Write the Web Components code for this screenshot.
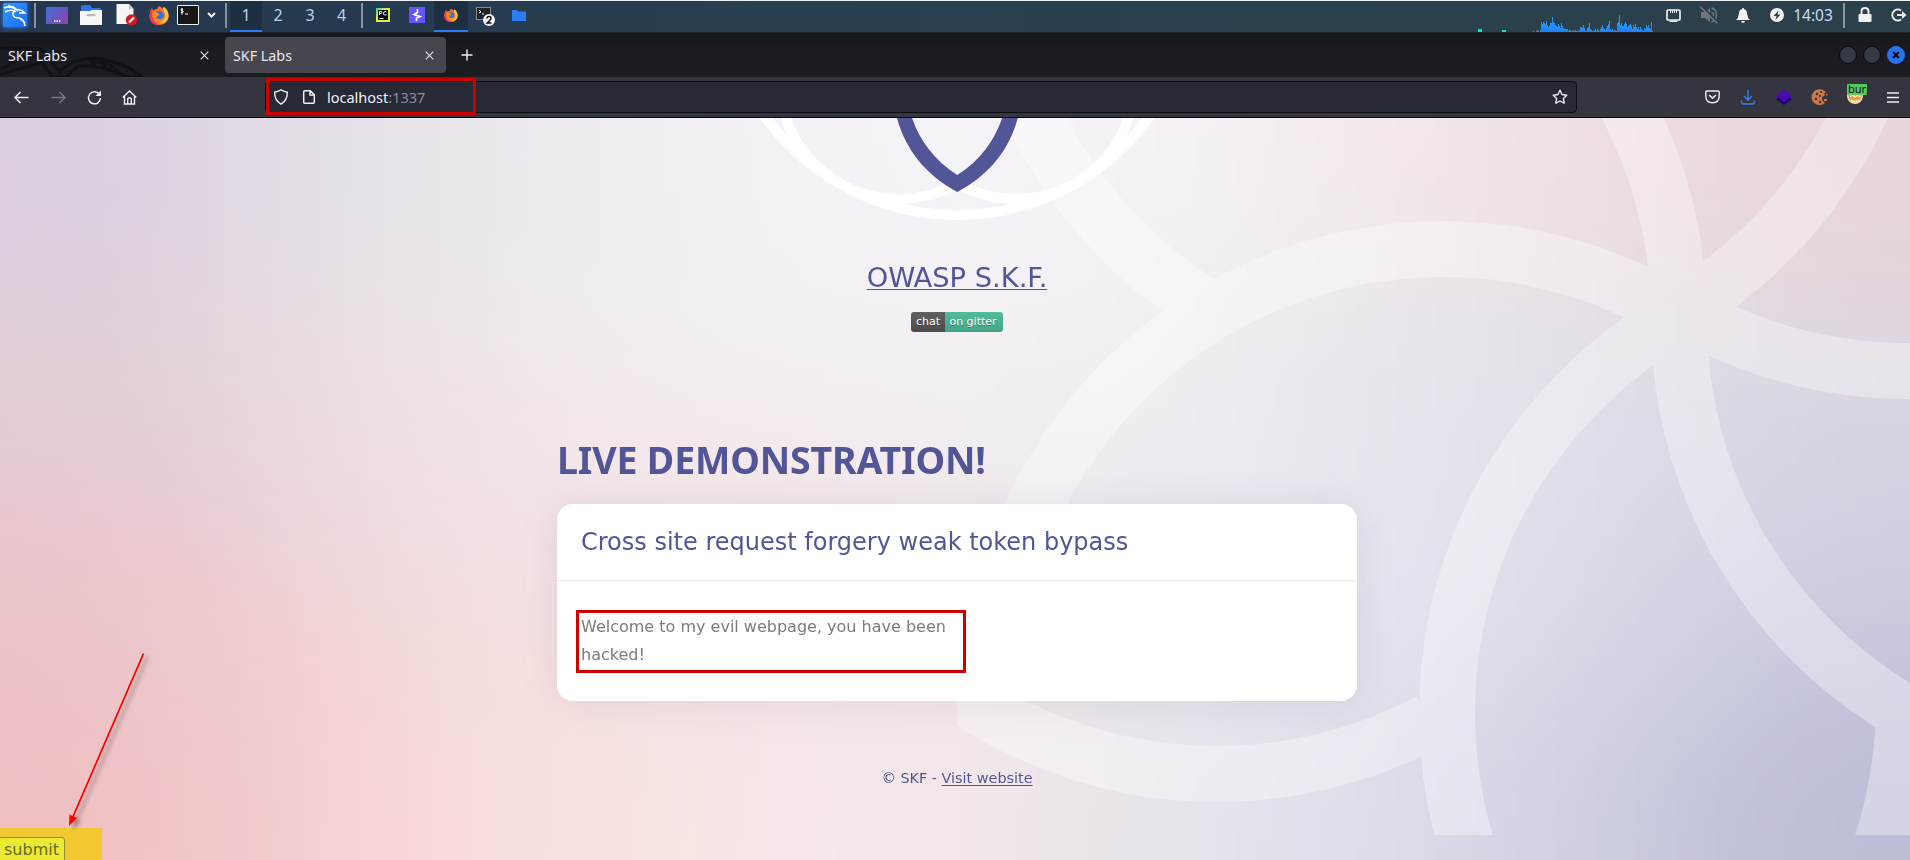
<!DOCTYPE html>
<html lang="en">
<head>
<meta charset="utf-8">
<title>SKF Labs</title>
<style>
html,body{margin:0;height:100%;overflow:hidden}
body{font-family:"Noto Sans","Open Sans",sans-serif}
</style>
</head>
<body>
<desk-top></desk-top>
<script>
const define=(name,html,setup)=>customElements.define(name,class extends HTMLElement{
  constructor(){super();const t=document.createElement('template');t.innerHTML=html;
    this.attachShadow({mode:'open'}).append(t.content.cloneNode(true));}
  connectedCallback(){if(setup)setup(this.shadowRoot,this);}
});

const fox=`<path d="M10 1C13 2 14 4 14.500 5C16 4 15 3 15 2C18 4 20 8 19.500 12C19 17 15 20 10 20C4 20 .5 16 .5 11C.5 8 1.500 5 3 3L4 5.500C6 4 8 4 8.500 4C8.600 3 9 2 10 1Z" fill="#ff6a30"/><path d="M15 2C18 4 20 8 19.500 12C18.500 17 14 19 10 18.500C15 17 17 12 15.500 8C15 6.500 14 5.500 14 4C14 3 14 2 15 2Z" fill="#ffc43a"/><path d="M3 3C1.500 5 .5 8 .5 11C.5 16 4 20 10 20C6 18 3 15 3 11Z" fill="#f0325f"/><circle cx="10" cy="11" r="4.800" fill="#2f74dd"/><path d="M4 7C6 6.500 7.500 7 9 8.500C11 8.500 11 10 9 10.500C7 12 6.500 13 9 14C11 15 13.500 14 14.500 12C14.500 16 12 18 9 17.500C5 17 3 13 4 7Z" fill="#ff8a22"/>`;
const icons={
 kali:[24,24,`<defs><linearGradient id="k" y2="1"><stop stop-color="#2b9cff"/><stop offset="1" stop-color="#2468ee"/></linearGradient></defs><rect width="24" height="24" rx="1" fill="url(#k)"/><path d="M1 5Q8 2 14 7M2 9Q7 6 13 8.500M5 3Q11 3 15 8M13 8Q9 9 10 12Q11 15 16 15Q21 16 22 23M14 7Q18 6 22 10Q19 10 16 10M17 16Q20 17 22 20" fill="none" stroke="#fff" stroke-width="1.500"/>`],
 desk:[22,17,`<defs><linearGradient id="d" x2="1" y2=".6"><stop stop-color="#3b72dc"/><stop offset="1" stop-color="#8449ae"/></linearGradient></defs><rect width="22" height="17" rx="1" fill="url(#d)"/><path d="M8 14h1.500m1 0H12m1 0h1.500" stroke="#fff" stroke-width="1.300"/>`],
 files:[22,21,`<path d="M1 1q0-1 1-1h8l2 3h8q1 0 1 1v4H1z" fill="#2f74e8"/><path d="M0 6h10l2-1h10v15H0z" fill="#f7f7f7"/><rect x="6.500" y="9" width="9" height="2.200" rx="1" fill="#b8b8b8"/>`],
 doc:[22,22,`<path d="M.5 0H13l4.500 5v15H.5z" fill="#f6f6f6"/><path d="M13 0v5h4.500z" fill="#ccc"/><circle cx="15.500" cy="16" r="5.700" fill="#d41920"/><path d="M13 18.500l5-5" stroke="#fff" stroke-width="2"/>`],
 fox:[20,21,fox],
 term:[22,20,`<rect x=".5" y=".5" width="21" height="19" rx=".5" fill="#171717" stroke="#eee"/><path d="M6 4q-2-.5-2 .8t2 1.400-2 1.600M5 3v6.500M3.800 8h1M8 9h3" fill="none" stroke="#fff"/>`],
 chev:[9,6,`<path d="M1 1l3.500 3.500L8 1" fill="none" stroke="#eee" stroke-width="2"/>`],
 pc:[14,14,`<defs><linearGradient id="p" x2="1" y2="1"><stop stop-color="#21d789"/><stop offset=".4" stop-color="#e0f042"/><stop offset="1" stop-color="#d6ee4a"/></linearGradient></defs><rect width="14" height="14" fill="url(#p)"/><rect x="2" y="2" width="10" height="10" fill="#050505"/><path d="M3.500 7V3.500H5q1 0 1 1t-1 1H3.500M10.500 4Q10 3.500 9 3.500T7.500 5.200 9 7t1.500-.5M3.500 10.500h4" fill="none" stroke="#fff" stroke-width="1"/>`],
 bolt2:[16,16,`<rect width="16" height="16" fill="#6355ff"/><path d="M8.500 2v3.500L5 7.500l6 2-3.500 1.500V14" fill="none" stroke="#fff" stroke-width="1.700"/>`],
 term2:[20,20,`<rect x=".5" y=".5" width="14" height="12" fill="#20242a" stroke="#858a90"/><path d="M3 3l2 2-2 1M6 7h2" fill="none" stroke="#fff"/><circle cx="13" cy="13" r="6" fill="#f4f4f4"/><path d="M11 11.500q0-2 2-2t2 1.700q0 1.300-3.800 4.800H15.500" fill="none" stroke="#111" stroke-width="1.500"/>`],
 folder:[14,11,`<path d="M0 0h5l1.500 1.500H14V11H0z" fill="#2f7cf2"/>`],
 net:[15,13,`<rect x="1" y="1" width="13" height="10" rx="1" fill="none" stroke="#eee" stroke-width="1.700"/><path d="M3.500 11.500h8v1.500h-8z" fill="#eee"/><path d="M4.500 1v3m2-3v3m2-3v3m2-3v3" stroke="#eee"/>`],
 mute:[18,18,`<path d="M1 6h4l5-4v14l-5-4H1z" fill="#70777d"/><path d="M11.500 2q5 1.500 5 7t-5 7M11.500 6q2 1 2 3t-2 3" fill="none" stroke="#70777d" stroke-width="1.600"/><path d="M1 0l17 17" stroke="#2b3d49" stroke-width="3"/><path d="M0 .5l17.500 17" stroke="#70777d" stroke-width="1.600"/>`],
 bell:[14,15,`<path d="M7 0q1 0 1.200 1.200Q11 2 11.200 6q.2 4 2.800 6H0q2.600-2 2.800-6Q3 2 5.800 1.200 6 0 7 0zM5 13h4q-.5 2-2 2t-2-2z" fill="#f2f2f2"/>`],
 power:[14,14,`<circle cx="7" cy="7" r="7" fill="#f2f2f2"/><path d="M8.500 2.500L3.500 8h3l-1 4 5-5.500h-3z" fill="#2c3e4a"/>`],
 lock:[14,16,`<path d="M1.500 7h11q1 0 1 1v6q0 1-1 1h-11q-1 0-1-1V8q0-1 1-1z" fill="#f2f2f2"/><path d="M3.500 8V4.500q0-3.500 3.500-3.500t3.500 3.500V8" fill="none" stroke="#f2f2f2" stroke-width="2"/>`],
 out:[16,14,`<path d="M10 2.500A5.500 5.500 0 1 0 10 11.500" fill="none" stroke="#eee" stroke-width="2"/><path d="M6 6h5V3l4.500 4L11 11V8H6z" fill="#eee"/>`],
 close:[9,9,`<path d="M.7.700l7.600 7.600M8.300.7L.7 8.300" stroke="#ddd" stroke-width="1.200"/>`],
 plus:[12,12,`<path d="M6 .5v11M.5 6h11" stroke="#eee" stroke-width="1.400"/>`],
 back:[15,13,`<path d="M6.500 1L1 6.500 6.500 12M1 6.500h13.500" fill="none" stroke="#eee" stroke-width="1.500"/>`],
 fwd:[15,13,`<path d="M8.500 1L14 6.500 8.500 12M14 6.500H.5" fill="none" stroke="#777981" stroke-width="1.500"/>`],
 reload:[15,15,`<path d="M12.500 4.500A6 6 0 1 0 13.500 8" fill="none" stroke="#eee" stroke-width="1.500"/><path d="M14 .5V6H8.500z" fill="#eee"/>`],
 home:[15,15,`<path d="M.7 7.500L7.500 1l6.800 6.500M2.500 6v8h10V6M5.700 14V9q0-1 1-1h1.600q1 0 1 1v5" fill="none" stroke="#eee" stroke-width="1.400"/>`],
 shield:[14,16,`<path d="M7 .8Q9 2.500 13.300 3.200 13.600 11 7 15.200.4 11 .7 3.200 5 2.500 7 .8z" fill="none" stroke="#eee" stroke-width="1.400"/>`],
 page:[12,14,`<path d="M1.700.8h5.600l4 4v7.500q0 1-1 1H1.700q-1 0-1-1V1.800q0-1 1-1zM7 1v4h4" fill="none" stroke="#eee" stroke-width="1.500"/>`],
 star:[16,16,`<path d="M8 1.200l2.100 4.300 4.700.7-3.400 3.300.8 4.700L8 12l-4.200 2.200.8-4.700L1.200 6.200l4.700-.7z" fill="none" stroke="#eee" stroke-width="1.400" stroke-linejoin="round"/>`],
 pocket:[15,14,`<path d="M2 1h11q1.200 0 1.200 1.200V6q0 6.700-6.700 6.700T.8 6V2.200Q.8 1 2 1z" fill="none" stroke="#eee" stroke-width="1.400"/><path d="M4 5l3.500 3.200L11 5" fill="none" stroke="#eee" stroke-width="1.600"/>`],
 down:[14,15,`<path d="M7 0v10M3 6l4 4 4-4M.7 10.500v2q0 1.500 1.500 1.500h9.600q1.500 0 1.500-1.500v-2" fill="none" stroke="#3581ee" stroke-width="1.400"/>`],
 gem:[16,16,`<path d="M0 10l8-6 8 6-8 6z" fill="#200570"/><path d="M0 7l8-7 8 7-8 6z" fill="#4b0ab0"/>`],
 cookie:[16,16,`<path d="M12 1.500A8 8 0 1 0 13 14L10.500 11.500 10 8l3-1.500-1-2 2-1z" fill="#c5784c"/><g fill="#51291d"><circle cx="5" cy="5" r="1.200"/><circle cx="9" cy="3" r="1"/><circle cx="4" cy="10" r="1.200"/><circle cx="8" cy="13" r="1.200"/><circle cx="8" cy="7" r="1"/></g><path d="M12 10h3v2h-3zM14 5h1.500v1.500H14z" fill="#c5784c"/>`],
 menu:[12,11,`<path d="M0 1h12M0 5.500h12M0 10h12" stroke="#eee" stroke-width="1.300"/>`]
};
define('ui-icon','<style>:host{display:block;flex:none}svg{display:block;overflow:visible}</style>',(r,h)=>{
  const [w,hh,s]=icons[h.getAttribute('name')];const W=h.getAttribute('w')||w;
  r.innerHTML+=`<svg width="${W}" height="${hh*W/w}" viewBox="0 0 ${w} ${hh}">${s}</svg>`;
});

/* One slot of a bar: content centred in a box of given width */
define('bar-cell','<style>:host{display:flex;flex:none;align-items:center;justify-content:center;height:100%;box-sizing:border-box;padding-bottom:var(--lift,0)}:host([active]){background:#1f2f42;border-bottom:2px solid #2b7cf4;padding-bottom:1px}</style><slot></slot>',(r,h)=>{h.style.width=h.getAttribute('w')+'px'});

define('cpu-graph','<style>:host{display:flex;flex:none;align-items:flex-end;width:120px;height:100%}i{flex:1;background:linear-gradient(#219bf5,#2479fa)}</style>',r=>{
  const v=[1,0,0,1,2,1,0,2,10,8,10,9,8,11,7,5,6,9,9,15,10,9,7,6,5,8,6,4,9,6,4,3,3,3,3,1,2,2,1,1,2,1,2,1,1,1,2,5,5,4,7,4,2,1,4,5,9,3,2,1,1,2,3,1,3,2,1,3,5,7,4,3,2,4,6,8,11,3,2,3,1,2,2,1,9,10,17,7,9,6,6,8,10,8,5,6,7,8,6,3,7,5,8,5,3,5,2,5,3,2,1,4,3,7,5,7,4,3,10,1];
  for(const n of v.slice(0,120)){const e=document.createElement('i');e.style.height=n+'px';r.append(e);}
});

define('system-panel',`<style>
:host{display:block;height:33px;background:#24282e;overflow:hidden;--lift:3px}
.b{display:flex;align-items:center;height:31px;border-top:1px solid #eef4f8;background:linear-gradient(90deg,#25374f,#28404f 50%,#2c404b)}
.s{width:2px;height:25px;background:#8b949c;flex:none;margin-bottom:3px}
.n{font-size:16px;color:#b9d0ea;line-height:24px}
.r{display:flex;margin-left:auto;align-items:center;height:100%}
.t{width:4px;background:#0fe6d0;align-self:flex-end}
.c{font-size:15.500px;color:#c9dcf0;line-height:24px}
.k{box-shadow:0 0 5px #2b86ff}
</style><div class="b">
<bar-cell w="30"><ui-icon class="k" name="kali"></ui-icon></bar-cell><span style="width:4px"></span><span class="s"></span><span style="width:1px"></span>
<bar-cell w="40"><ui-icon name="desk"></ui-icon></bar-cell><bar-cell w="28"><ui-icon name="files"></ui-icon></bar-cell><bar-cell w="43"><ui-icon name="doc"></ui-icon></bar-cell><bar-cell w="21"><ui-icon name="fox"></ui-icon></bar-cell><bar-cell w="38"><ui-icon name="term"></ui-icon></bar-cell><bar-cell w="9"><ui-icon name="chev"></ui-icon></bar-cell><span style="width:9px"></span><span class="s"></span><span style="width:3px"></span>
<bar-cell active w="32"><span class="n">1</span></bar-cell><bar-cell w="32"><span class="n">2</span></bar-cell><bar-cell w="32"><span class="n">3</span></bar-cell><bar-cell w="31"><span class="n">4</span></bar-cell><span style="width:4px"></span><span class="s"></span>
<bar-cell w="40"><ui-icon name="pc"></ui-icon></bar-cell><bar-cell w="28"><ui-icon name="bolt2"></ui-icon></bar-cell><span style="width:3px"></span>
<bar-cell active w="34"><ui-icon name="fox" w="14"></ui-icon></bar-cell><bar-cell w="36"><ui-icon name="term2" style="padding-top:4px"></ui-icon></bar-cell><bar-cell w="29"><ui-icon name="folder"></ui-icon></bar-cell>
<div class="r"><span class="t" style="height:3px;margin-right:20px"></span><span class="t" style="height:2px;margin-right:27px"></span><cpu-graph></cpu-graph>
<bar-cell w="40"><ui-icon name="net"></ui-icon></bar-cell><span style="width:5px"></span><bar-cell w="22"><ui-icon name="mute"></ui-icon></bar-cell><bar-cell w="46"><ui-icon name="bell"></ui-icon></bar-cell><bar-cell w="22"><ui-icon name="power"></ui-icon></bar-cell><bar-cell w="50"><span class="c">14:03</span></bar-cell><span style="width:5px"></span><span class="s"></span><bar-cell w="40"><ui-icon name="lock"></ui-icon></bar-cell><span style="width:3px"></span><bar-cell w="22"><ui-icon name="out"></ui-icon></bar-cell></div>
</div>`);

define('browser-tab',`<style>:host{display:flex;align-items:center;justify-content:space-between;box-sizing:border-box;width:221px;height:36px;padding:0 12px 0 8px;border-radius:4px;font-size:14.300px;color:#e8e8ec}:host([on]){background:#45464e}</style><slot></slot><ui-icon name="close"></ui-icon>`);

define('tab-strip',`<style>
:host{display:flex;align-items:center;height:44px;background:linear-gradient(#15161a,#1b1c21 45%);position:relative}
svg.d{position:absolute;left:0;top:11px}
browser-tab{position:relative}
.w{margin-left:auto;display:flex;gap:6px;padding-right:5px}
.w i{width:16px;height:16px;border-radius:50%;border:1px solid #08090c;background:#353a46;display:flex;align-items:center;justify-content:center}
.w i.x{background:#2a72f0;border-color:#2a72f0}
</style><svg class="d" width="150" height="33" viewBox="0 0 150 33"><path d="M0 5Q25 2 42 6L60 28Q72 14 95 14Q125 18 142 33H128Q100 20 78 22L66 33H52L38 12Q20 12 0 26M0 31Q20 24 45 18" fill="none" stroke="#111216" stroke-width="3"/><path d="M88 16l7 7 2-6 8 8 2-6 8 10 10 4Q110 14 88 13z" fill="#111216"/></svg>
<browser-tab>SKF Labs</browser-tab><browser-tab on style="margin-left:4px">SKF Labs</browser-tab><ui-icon name="plus" style="margin-left:15px"></ui-icon>
<div class="w"><i></i><i></i><i class="x"><svg width="8" height="8"><path d="M1 1l6 6M7 1L1 7" stroke="#0b1220" stroke-width="2.200"/></svg></i></div>`);

define('mark-box','<style>:host{position:absolute;box-sizing:border-box;border:3px solid #cc0000;pointer-events:none}</style>');

define('nav-bar',`<style>
:host{display:flex;align-items:center;height:40px;background:#34353e;border-bottom:1px solid #0a0b10;position:relative}
.u{display:flex;align-items:center;box-sizing:border-box;width:1312px;height:32px;border:1px solid #0c0d13;border-radius:4px;background:#272935;padding:0 8px;margin-left:115px}
.a{font-size:14.500px;color:#f0f0f4;margin-left:12px}.a span{color:#8d8e98}
.e{display:flex;margin-left:auto;align-items:center;height:100%}
.f{position:relative;width:20px;height:20px}.f b{position:absolute;left:0;top:-3px;width:20px;height:11px;background:#58c860;border-radius:1px;font:11px/10px "Noto Sans",sans-serif;color:#111;overflow:hidden;padding-left:1px;box-sizing:border-box}
.f svg{position:absolute;left:0;top:0}
</style>
<bar-cell w="43"><ui-icon name="back"></ui-icon></bar-cell><bar-cell w="30"><ui-icon name="fwd"></ui-icon></bar-cell><bar-cell w="42"><ui-icon name="reload"></ui-icon></bar-cell><bar-cell w="28"><ui-icon name="home"></ui-icon></bar-cell><span style="width:7px"></span>
<div class="u"><ui-icon name="shield"></ui-icon><ui-icon name="page" style="margin-left:15px"></ui-icon><div class="a">localhost<span>:1337</span></div><ui-icon name="star" style="margin-left:auto"></ui-icon></div>
<div class="e"><bar-cell w="32"><ui-icon name="pocket"></ui-icon></bar-cell><bar-cell w="39"><ui-icon name="down"></ui-icon></bar-cell><bar-cell w="34"><ui-icon name="gem"></ui-icon></bar-cell><bar-cell w="38"><ui-icon name="cookie"></ui-icon></bar-cell><bar-cell w="36"><div class="f"><svg width="16" height="18"><circle cx="8" cy="9" r="8" fill="#e9dcc5"/><circle cx="8" cy="9" r="6.500" fill="#f59a2b"/><path d="M3 10l3-2 2 2 3-2 2 2M4 13q4 3 8 0" fill="none" stroke="#fff5e0" stroke-width="1.500"/></svg><b>burp</b></div></bar-cell><bar-cell w="35"><ui-icon name="menu"></ui-icon></bar-cell></div>
<mark-box style="left:266px;top:1px;width:210px;height:37px"></mark-box>`);

/* Colour field with the interlocking rings of the lab theme */
define('lab-backdrop',`<style>:host{position:absolute;inset:0;overflow:hidden}canvas{position:absolute;width:100%;height:100%}svg{position:absolute;left:0;top:0}</style>
<canvas width="191" height="74"></canvas>
<svg width="1910" height="742" viewBox="0 118 1910 742"><defs><clipPath id="c"><path d="M957 118H1910V835H957z"/></clipPath></defs>
<g clip-path="url(#c)"><g id="rings" fill="none" stroke="#fff" stroke-width="56" opacity=".34"></g></g></svg>`,r=>{
 const grid=["dacfdf e4dfe6 ecebf0 f3f1f5 f5f4f8 f5f2f4 f4eaed eedee3 e9d4db","dfcfda e8dfe5 f1ebef f3f0f3 f3f1f5 f1eff2 e8e5ec e3e0e8 ded7e0","e7c8cf edd9dd f3e5e8 f3e7eb f1eaee ececf2 e6e7ef dfdee8 d2d2e2","ecc2c7 f2d3d5 f6e1e1 f6e5e6 f3e8ea e9e8ee e4e5ee d8dae7 c8c9de","efbfc1 f5d1d1 fae2e0 f7e6e6 f4e8ec e6e4eb dedeea cdcfe1 bbbcd6"]
  .map(l=>l.split(' ').map(c=>[0,2,4].map(k=>parseInt(c.substr(k,2),16))));
 const at=(j,i)=>grid[Math.max(0,Math.min(4,j))][Math.max(0,Math.min(8,i))];
 const bs=t=>[(1-t)**3/6,(3*t**3-6*t*t+4)/6,(-3*t**3+3*t*t+3*t+1)/6,t**3/6];
 const W=191,H=74,x=r.querySelector('canvas').getContext('2d'),im=x.createImageData(W,H);
 for(let b=0;b<H;b++)for(let a=0;a<W;a++){
  const u=(a+.5)/W*9-.5,v=(b+.5)/H*5-.5,i=Math.floor(u),j=Math.floor(v),wu=bs(u-i),wv=bs(v-j),o=(b*W+a)*4;
  for(let k=0;k<3;k++){let s=0;for(let m=0;m<4;m++)for(let n=0;n<4;n++)s+=wv[m]*wu[n]*at(j+m-1,i+n-1)[k];im.data[o+k]=s;}
  im.data[o+3]=255;
 }
 x.putImageData(im,0,0);
 /* centre x, centre y, radius, start and end angle in degrees (clockwise) */
 const arcs=[[1443,702,453,180,303],[1217,321,453,62,140],[1446,-82,457,122,160],[1446,-82,457,15,60],[1908,-82,453,80,121],[1222,318,457,-35,0],[2131,321,452,112,181],[1903,713,456,160,241],[1443,702,461,3,22]];
 r.getElementById('rings').innerHTML=arcs.map(([cx,cy,R,s,e])=>{
  const p=d=>{const q=d*Math.PI/180;return (cx+R*Math.cos(q)).toFixed(1)+' '+(cy+R*Math.sin(q)).toFixed(1);};
  return `<path d="M${p(s)}A${R} ${R} 0 0 1 ${p(e)}"/>`;}).join('');
});

define('skf-logo',`<style>:host{display:block;height:102px}svg{display:block}</style><svg width="500" height="102" viewBox="707 118 500 102"><g fill="none" stroke="#fff" stroke-width="10"><circle cx="957.300" cy="-22" r="237"/><circle cx="898.500" cy="80" r="119"/><circle cx="1016" cy="80" r="119"/></g><path d="M896.700 117C905 148 924 174 957.300 192C991 174 1010 148 1018 117H1002.500C995 140 980 161 957.300 175C935 161 919 140 911.700 117Z" fill="#525596"/></svg>`);

define('gitter-badge',`<style>:host{display:flex;height:20px;width:92px;border-radius:3px;overflow:hidden;font:11px/20px "DejaVu Sans",sans-serif;color:#fff;text-shadow:0 1px #0004}
span{text-align:center}.l{width:34px;background:linear-gradient(#5f5f5f,#4c4c4c)}.r{width:56px;padding-right:2px;background:linear-gradient(#52bb9b,#41a687)}</style><span class="l">chat</span><span class="r">on gitter</span>`);

define('lab-card',`<style>:host{display:block;position:relative;box-sizing:border-box;width:800px;height:197px;border-radius:16px;background:#fff;box-shadow:0 2px 40px rgba(60,50,90,.1)}
.h{height:77px;box-sizing:border-box;border-bottom:1px solid #ececec;padding:0 24px;font-size:24px;line-height:76px;color:#525596}
.b{padding:32px 24px;font-size:16px;line-height:28px;color:#7b7b7b;width:390px}</style><div class="h"><slot name="title"></slot></div><div class="b"><slot></slot></div>`);

define('arrow-note',`<style>:host{position:absolute;left:60px;top:530px}svg{display:block;filter:drop-shadow(4px 3px 2px #0006)}</style><svg width="100" height="185" viewBox="60 648 100 185"><path d="M143.500 653.500L72 819" stroke="#f00" stroke-width="1.800"/><path d="M69 826L69.500 814.500L77 818Z" fill="#f00"/></svg>`);

define('submit-strip',`<style>:host{position:absolute;left:0;bottom:0;width:102px;height:32px;background:#f2c730;overflow:hidden}
button{display:block;margin:9px 0 0 -2px;width:67px;height:28px;box-sizing:border-box;border:1px solid #8f8f2c;border-radius:3px;background:#eaea31;color:#68682a;font:16px/20px "DejaVu Sans",sans-serif;padding:1px 0 3px 0}</style><button>submit</button>`);

define('lab-page',`<style>
:host{display:flex;flex-direction:column;align-items:center;position:relative;height:742px;overflow:hidden;font-family:"DejaVu Sans",sans-serif;color:#525596;padding-left:4px;box-sizing:border-box}
skf-logo,gitter-badge,h1,.o,.f,lab-card{position:relative}
a{color:inherit;text-decoration:underline;text-underline-offset:2px;text-decoration-thickness:1px}
.o{font-size:27.300px;line-height:34px;margin-top:41px}
gitter-badge{margin-top:17px}
h1{font:bold 37.500px/50px "Noto Sans",sans-serif;letter-spacing:-.16px;margin:103px 0 0;width:800px;white-space:nowrap}
lab-card{margin-top:19px}
.f{font-size:14.400px;line-height:20px;margin-top:67px}
</style><lab-backdrop></lab-backdrop><skf-logo></skf-logo><a class="o">OWASP S.K.F.</a><gitter-badge></gitter-badge>
<h1><span>LIVE DEMONSTRATION!</span></h1>
<lab-card><span slot="title">Cross site request forgery weak token bypass</span>Welcome to my evil webpage, you have been hacked!<mark-box style="left:19px;top:106px;width:390px;height:63px"></mark-box></lab-card>
<div class="f">© SKF - <a>Visit website</a></div>
<submit-strip></submit-strip><arrow-note></arrow-note>`);

define('desk-top',`<style>:host{display:flex;flex-direction:column;width:1910px;height:860px;overflow:hidden}system-panel,tab-strip,nav-bar,lab-page{flex:none}</style><system-panel></system-panel><tab-strip></tab-strip><nav-bar></nav-bar><lab-page></lab-page>`);
</script>
</body>
</html>
